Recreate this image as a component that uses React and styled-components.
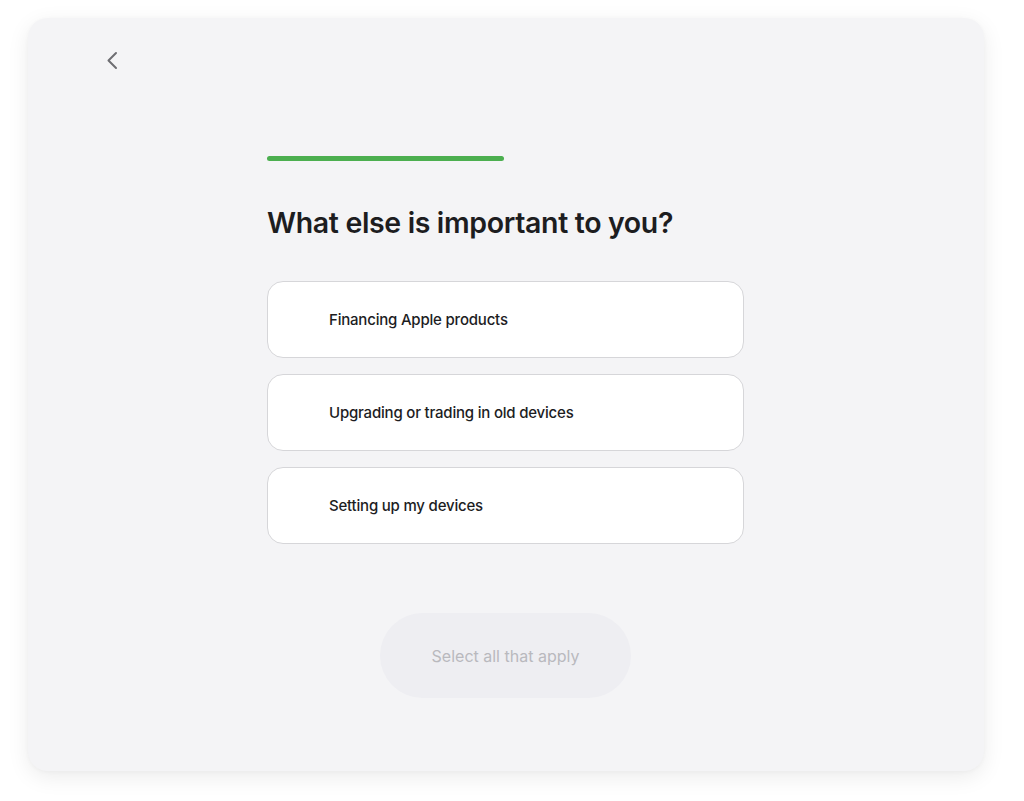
import React from "react";
import styled, { createGlobalStyle } from "styled-components";

const GlobalStyle = createGlobalStyle`
  html, body {
    margin: 0;
    padding: 0;
    background: #ffffff;
    font-family: Inter, "Liberation Sans", sans-serif;
    -webkit-font-smoothing: antialiased;
  }
  * {
    box-sizing: border-box;
  }
`;

const Page = styled.div`
  width: 1024px;
  height: 801px;
  padding: 18px 40px 30px 28px;
`;

const Panel = styled.main`
  width: 956px;
  height: 753px;
  background: #f4f4f6;
  border-radius: 20px;
  box-shadow: 0 6px 22px rgba(0, 0, 0, 0.08), 0 1px 4px rgba(0, 0, 0, 0.03);
  padding: 33px 0 0 78px;
`;

const BackButton = styled.button`
  display: flex;
  align-items: center;
  justify-content: center;
  width: 14px;
  height: 20px;
  padding: 0;
  border: none;
  background: none;
  color: #6e6e73;
  cursor: pointer;
`;

const Column = styled.section`
  width: 477px;
  margin: 85px 0 0 161px;
  display: flex;
  flex-direction: column;
`;

const Progress = styled.div`
  width: 237px;
  height: 5px;
  border-radius: 3px;
  background: #4caf50;
`;

const Title = styled.h1`
  margin: 44px 0 0;
  font-size: 28.5px;
  line-height: 36px;
  font-weight: 600;
  letter-spacing: -0.35px;
  color: #1d1d1f;
`;

const Options = styled.div`
  margin-top: 40px;
  display: flex;
  flex-direction: column;
  gap: 16px;
`;

const Option = styled.button`
  display: flex;
  align-items: center;
  height: 77px;
  width: 100%;
  padding: 0 0 0 61px;
  background: #ffffff;
  border: 1.5px solid #d6d6d9;
  border-radius: 16px;
  font-family: inherit;
  font-size: 15px;
  font-weight: 500;
  letter-spacing: -0.2px;
  color: #1d1d1f;
  text-align: left;
  cursor: pointer;
`;

const Footer = styled.div`
  display: flex;
  justify-content: center;
  margin-top: 69px;
`;

const SubmitButton = styled.button`
  width: 251px;
  height: 85px;
  border: none;
  border-radius: 43px;
  background: #eeeef2;
  color: #b9b9be;
  font-family: inherit;
  font-size: 16px;
  font-weight: 400;
  cursor: default;
`;

const options = [
  "Financing Apple products",
  "Upgrading or trading in old devices",
  "Setting up my devices",
];

export default function App() {
  return (
    <>
      <GlobalStyle />
      <Page>
        <Panel>
          <BackButton aria-label="Back">
            <svg width="14" height="20" viewBox="0 0 14 20" fill="none">
              <path
                d="M10 2 L2.5 9.5 L10 17"
                stroke="currentColor"
                strokeWidth="2"
                strokeLinecap="round"
                strokeLinejoin="round"
              />
            </svg>
          </BackButton>
          <Column>
            <Progress />
            <Title>What else is important to you?</Title>
            <Options>
              {options.map((o) => (
                <Option key={o}>{o}</Option>
              ))}
            </Options>
            <Footer>
              <SubmitButton disabled>Select all that apply</SubmitButton>
            </Footer>
          </Column>
        </Panel>
      </Page>
    </>
  );
}
